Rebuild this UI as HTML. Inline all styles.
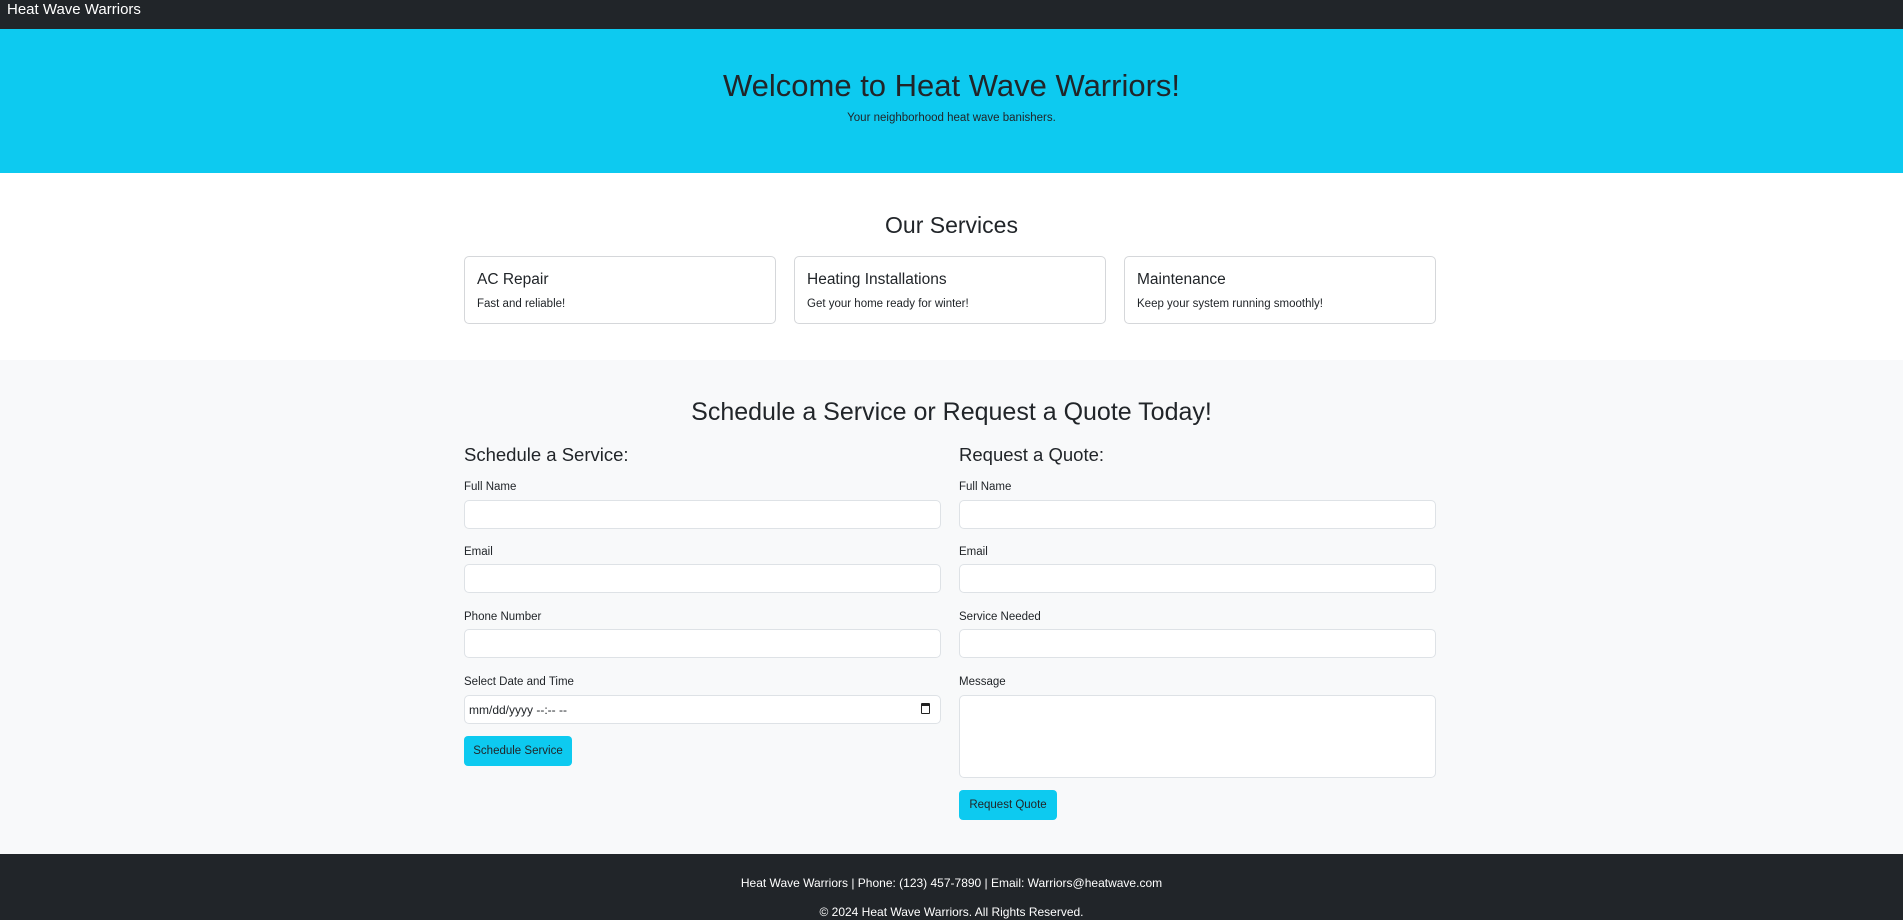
<!DOCTYPE html>
<html><head><meta charset="utf-8"><style>
*{box-sizing:border-box;margin:0;padding:0}
body{width:1903px;height:920px;overflow:hidden;font-family:"Liberation Sans",sans-serif;color:#212529;background:#f8f9fa;position:relative}
.a{position:absolute}
.nav{left:0;top:0;width:1903px;height:29px;background:#212529;color:#fff;font-size:15px;padding:1px 0 0 7px}
.hero{left:0;top:29px;width:1903px;height:144px;background:#0dcaf0;text-align:center}
.hero h1{position:absolute;top:39px;width:100%;font-size:31px;font-weight:500}
.hero p{position:absolute;top:83px;width:100%;font-size:11.5px}
.svc{left:0;top:173px;width:1903px;height:187px;background:#fff}
.c{text-align:center;width:1903px;left:0;font-weight:500}
.card{top:256px;width:312px;height:68px;border:1px solid #d5d7da;border-radius:5px;background:#fff;padding:12px 12px}
.card h5{font-size:15.5px;font-weight:500;margin-top:2px}
.card p{font-size:11.5px;margin-top:9px}
h4.a{font-size:18.5px;font-weight:500}
label.a{font-size:11.5px}
.in{height:29px;border:1px solid #dee2e6;border-radius:5px;background:#fff;width:477px}
.btn{background:#0dcaf0;border-radius:4px;font-size:11.5px;text-align:center;line-height:30px;height:30px}
.foot{left:0;top:854px;width:1903px;height:66px;background:#212529;color:#fff;font-size:12px;text-align:center}
</style></head><body>
<div class="a nav">Heat Wave Warriors</div>
<div class="a hero"><h1>Welcome to Heat Wave Warriors!</h1><p>Your neighborhood heat wave banishers.</p></div>
<div class="a svc"></div>
<div class="a c" style="top:212px;font-size:23px">Our Services</div>
<div class="a card" style="left:464px"><h5>AC Repair</h5><p>Fast and reliable!</p></div>
<div class="a card" style="left:794px"><h5>Heating Installations</h5><p>Get your home ready for winter!</p></div>
<div class="a card" style="left:1124px"><h5>Maintenance</h5><p>Keep your system running smoothly!</p></div>
<div class="a c" style="top:398px;font-size:25px">Schedule a Service or Request a Quote Today!</div>
<h4 class="a" style="left:464px;top:444px">Schedule a Service:</h4>
<h4 class="a" style="left:959px;top:444px">Request a Quote:</h4>
<label class="a" style="left:464px;top:481px">Full Name</label><div class="a in" style="left:464px;top:500px"></div>
<label class="a" style="left:464px;top:546px">Email</label><div class="a in" style="left:464px;top:564px"></div>
<label class="a" style="left:464px;top:611px">Phone Number</label><div class="a in" style="left:464px;top:629px"></div>
<label class="a" style="left:464px;top:676px">Select Date and Time</label><div class="a in" style="left:464px;top:695px;font-size:12px;padding:7px 4px;color:#212529">mm/dd/yyyy --:-- --<span style="position:absolute;right:10px;top:7px;width:9px;height:11px;border:1.5px solid #222;border-top-width:3px;border-radius:1px"></span></div>
<div class="a btn" style="left:464px;top:736px;width:108px">Schedule Service</div>
<label class="a" style="left:959px;top:481px">Full Name</label><div class="a in" style="left:959px;top:500px"></div>
<label class="a" style="left:959px;top:546px">Email</label><div class="a in" style="left:959px;top:564px"></div>
<label class="a" style="left:959px;top:611px">Service Needed</label><div class="a in" style="left:959px;top:629px"></div>
<label class="a" style="left:959px;top:676px">Message</label><div class="a in" style="left:959px;top:695px;height:83px"></div>
<div class="a btn" style="left:959px;top:790px;width:98px">Request Quote</div>
<div class="a foot"><div style="position:absolute;top:22px;width:100%">Heat Wave Warriors | Phone: (123) 457-7890 | Email: Warriors@heatwave.com</div><div style="position:absolute;top:51px;width:100%">© 2024 Heat Wave Warriors. All Rights Reserved.</div></div>
</body></html>
